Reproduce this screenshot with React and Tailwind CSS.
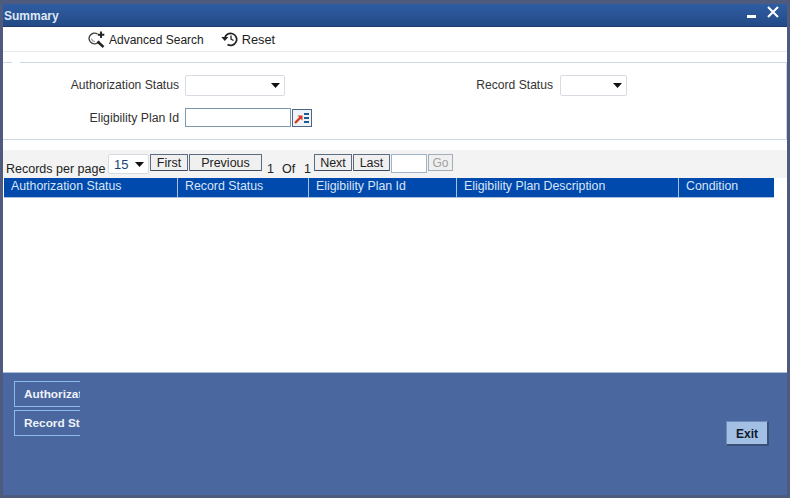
import React from "react";

const FONT = { fontFamily: '"Liberation Sans", Arial, sans-serif' };

function Caret() {
  return (
    <svg width="9" height="5" viewBox="0 0 9 5" className="shrink-0">
      <path d="M0 0H9L4.5 5Z" fill="#111" />
    </svg>
  );
}

function FakeSelect({ className, value }) {
  return (
    <div className={`flex items-center justify-between bg-white border border-[#d8dce2] rounded-[2px] pr-[4px] ${className}`}>
      <span className="pl-[5px] text-[13px] leading-[15px] text-[#1c3f7c]">{value}</span>
      <Caret />
    </div>
  );
}

function PagerBtn({ children, className = "" }) {
  return (
    <button className={`h-[17px] pt-px bg-[#f0f0f0] border border-[#5d6b80] border-b-[#3f4a5c] text-[12.5px] leading-[15px] text-[#222] text-center rounded-[1px] ${className}`}>
      {children}
    </button>
  );
}

function FooterTab({ label }) {
  return (
    <div className="w-[66px] h-[26px] overflow-hidden border-y border-l border-[#8ab9ef] pl-[9px] pt-[5px] text-[11.8px] leading-[15px] font-bold text-[#eef3fb] whitespace-nowrap">
      {label}
    </div>
  );
}

const COLUMNS = [
  { label: "Authorization Status", w: "w-[174px]" },
  { label: "Record Status", w: "w-[131px]" },
  { label: "Eligibility Plan Id", w: "w-[148px]" },
  { label: "Eligibility Plan Description", w: "w-[222px]" },
  { label: "Condition", w: "w-[95px]" },
];

export default function App() {
  return (
    <div style={FONT} className="w-[790px] h-[498px] overflow-hidden bg-[#4f5b7e] pt-[4px] px-[3px] pb-[3px] flex flex-col">
      {/* Title bar */}
      <div className="h-[23px] shrink-0 bg-gradient-to-b from-[#2f5da3] to-[#234a86] border-b border-[#1d3a66] flex items-center justify-between pr-[8px]">
        <span className="pl-[1px] pt-[2px] text-[12px] font-bold text-[#dfe8f5]">Summary</span>
        <div className="flex items-start gap-[11px] -mt-[7px]">
          <div className="w-[9px] h-[3px] bg-white mt-[9px]" />
          <svg width="12" height="12" viewBox="0 0 12 12">
            <path d="M1 1L11 11M11 1L1 11" stroke="#fff" strokeWidth="2" />
          </svg>
        </div>
      </div>

      {/* Toolbar */}
      <div className="h-[25px] shrink-0 bg-white border-b border-[#e6e9ee] flex items-center pl-[85px] pt-[1px] text-[12px] text-[#222]">
        <svg width="17" height="17" viewBox="0 0 17 17" fill="none" className="mr-[4px]">
          <path d="M9.5 3A5.4 5.4 0 1 0 11.3 10" stroke="#444" strokeWidth="1.4" />
          <path d="M3.5 7.5A3.6 3.6 0 0 0 7 10.6" stroke="#999" strokeWidth="1.2" />
          <path d="M9.5 10.5L15.5 16" stroke="#222" strokeWidth="2.4" />
          <path d="M13 0.5V7M9.8 3.8H16.3" stroke="#222" strokeWidth="1.9" />
        </svg>
        <span>Advanced Search</span>
        <svg width="17" height="16" viewBox="0 0 17 16" fill="none" className="ml-[17px] mr-[4px] -mt-[1px]">
          <path d="M3.8 7A6 6 0 1 1 6.5 13.5" stroke="#222" strokeWidth="1.7" />
          <path d="M0.3 6H7.3L3.8 10Z" fill="#222" />
          <path d="M10 4.5V8.2L12.5 9.5" stroke="#222" strokeWidth="1.3" />
        </svg>
        <span className="text-[12.8px]">Reset</span>
      </div>

      {/* Main white area */}
      <div className="flex-1 bg-white flex flex-col min-h-0">
        {/* Search fieldset */}
        <div className="mt-[10px] h-[78px] shrink-0 border-b border-r border-[#cdd8e3] text-[12.1px] text-[#333]">
          <div className="flex h-px">
            <div className="w-[9px] bg-[#cdd8e3]" />
            <div className="w-[8px]" />
            <div className="flex-1 bg-[#cdd8e3]" />
          </div>
          <div className="flex items-center mt-[12px] h-[21px]">
            <span className="w-[176px] text-right">Authorization Status</span>
            <FakeSelect className="ml-[6px] w-[100px] h-[21px]" />
            <span className="w-[268px] text-right">Record Status</span>
            <FakeSelect className="ml-[7px] w-[67px] h-[21px]" />
          </div>
          <div className="flex items-center mt-[12px] h-[19px]">
            <span className="w-[176px] pt-px text-right text-[12.3px]">Eligibility Plan Id</span>
            <div className="ml-[6px] w-[106px] h-[19px] bg-white border border-[#7d99ad]" />
            <div className="ml-[1px] w-[20px] h-[18px] border border-[#4b6585] bg-[#eef3f8] flex items-center justify-center">
              <svg width="16" height="12" viewBox="0 0 16 12">
                <path d="M1 11L7 5" stroke="#d9381e" strokeWidth="2.4" />
                <path d="M3.5 3.5H8.5V8.5Z" fill="#d9381e" />
                <path d="M10 2H15M10 6H15M10 10H15" stroke="#1c5a94" strokeWidth="2" />
              </svg>
            </div>
          </div>
        </div>

        {/* Pager */}
        <div className="mt-[10px] h-[28px] shrink-0 bg-[#f3f3f3] flex items-start pt-[4px] pl-[3px] text-[12.5px] text-[#222]">
          <span className="mt-[6px] w-[102px] whitespace-nowrap">Records per page</span>
          <FakeSelect className="w-[41px] h-[20px]" value="15" />
          <PagerBtn className="ml-px w-[38px]">First</PagerBtn>
          <PagerBtn className="ml-px w-[73px]">Previous</PagerBtn>
          <span className="mt-[6px] ml-[5px] w-[15px]">1</span>
          <span className="mt-[6px] w-[22px]">Of</span>
          <span className="mt-[6px] w-[10px]">1</span>
          <PagerBtn className="w-[38px]">Next</PagerBtn>
          <PagerBtn className="ml-px w-[37px]">Last</PagerBtn>
          <div className="ml-px w-[36px] h-[19px] bg-white border border-[#9fb4c8]" />
          <button className="ml-px w-[25px] h-[17px] pt-px border border-[#a4aeb8] bg-[#f0f0f0] text-[12px] leading-[15px] text-[#a0a0a0]">Go</button>
        </div>

        {/* Table header */}
        <div className="ml-px w-[770px] h-[20px] shrink-0 bg-[#0049ad] border-b border-[#a8c0de] flex text-[12.35px] text-[#d9e5f5]">
          {COLUMNS.map((col) => (
            <div key={col.label} className={`${col.w} shrink-0 pl-[7px] pt-px leading-[15px] border-r border-[#a8c0de] last:border-r-0 whitespace-nowrap`}>
              {col.label}
            </div>
          ))}
        </div>
        <div className="flex-1" />
      </div>

      {/* Footer */}
      <div className="h-[123px] shrink-0 bg-[#4a679f] border-t border-[#a9bedd] flex justify-between pl-[11px] pr-[18px]">
        <div className="pt-[8px] flex flex-col gap-[3px]">
          <FooterTab label="Authorization Status" />
          <FooterTab label="Record Status" />
        </div>
        <button className="mt-[48px] w-[43px] h-[25px] pt-[1px] bg-[#a3bfe4] border-t border-l border-[#6f8db9] border-b-2 border-r-2 border-b-[#3b5077] border-r-[#3b5077] text-[12px] font-bold text-[#10192c]">
          Exit
        </button>
      </div>
    </div>
  );
}
